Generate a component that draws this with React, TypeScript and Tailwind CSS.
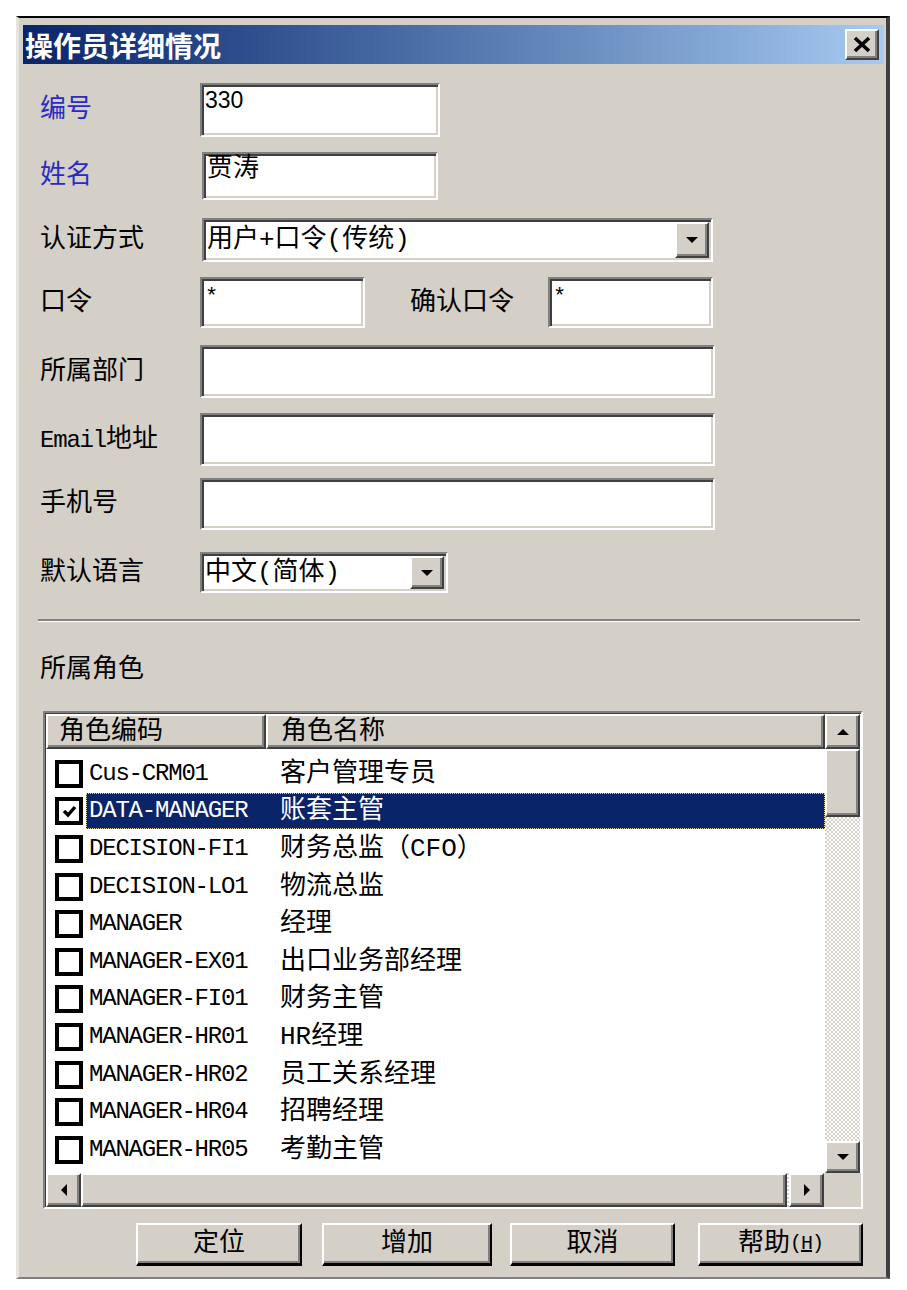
import React from "react";

const cjk = "font-['Liberation_Mono','Noto_Sans_CJK_SC',monospace]";
const sunken =
  "bg-white border-2 border-t-[#808080] border-l-[#808080] border-b-white border-r-white shadow-[inset_2px_2px_0_#404040,inset_-2px_-2px_0_#d4d0c8]";
const raised =
  "bg-[#d4d0c8] border-2 border-t-white border-l-white border-b-[#404040] border-r-[#404040] shadow-[inset_-2px_-2px_0_#808080]";
const checker =
  "bg-[repeating-conic-gradient(#ffffff_0%_25%,#d4d0c8_0%_50%)] bg-size-[4px_4px]";

const roles: [string, string, boolean][] = [
  ["Cus-CRM01", "客户管理专员", false],
  ["DATA-MANAGER", "账套主管", true],
  ["DECISION-FI1", "财务总监（CFO）", false],
  ["DECISION-LO1", "物流总监", false],
  ["MANAGER", "经理", false],
  ["MANAGER-EX01", "出口业务部经理", false],
  ["MANAGER-FI01", "财务主管", false],
  ["MANAGER-HR01", "HR经理", false],
  ["MANAGER-HR02", "员工关系经理", false],
  ["MANAGER-HR04", "招聘经理", false],
  ["MANAGER-HR05", "考勤主管", false],
];

const Arrow = ({ dir }: { dir: "up" | "down" | "left" | "right" }) => {
  const pts = {
    up: "1,7 7,1 13,7",
    down: "1,1 13,1 7,7",
    left: "7,1 7,13 1,7",
    right: "1,1 1,13 7,7",
  }[dir];
  const vert = dir === "up" || dir === "down";
  return (
    <svg width={vert ? 14 : 8} height={vert ? 8 : 14} viewBox={vert ? "0 0 14 8" : "0 0 8 14"}>
      <polygon points={pts} fill="#000" />
    </svg>
  );
};

const Label = ({ text, blue }: { text: string; blue?: boolean }) => (
  <div className={`w-[160px] text-[26px] leading-none ${blue ? "text-[#2b2bc4]" : "text-black"}`}>
    {text}
  </div>
);

const Combo = ({ text, w, h }: { text: string; w: string; h: string }) => (
  <div className={`${sunken} ${w} ${h} flex items-center`}>
    <div className="flex-1 pl-[3px] text-[26px] leading-none text-black whitespace-nowrap">{text}</div>
    <div className={`${raised} w-[34px] h-[calc(100%-4px)] mr-[2px] flex items-center justify-center`}>
      <Arrow dir="down" />
    </div>
  </div>
);

const Btn = ({ children, w, ml }: { children: React.ReactNode; w: string; ml?: string }) => (
  <div
    className={`${w} ${ml || ""} h-[43px] bg-[#d4d0c8] border-t-2 border-l-2 border-t-white border-l-white border-r-2 border-b-[3px] border-r-black border-b-black shadow-[inset_-2px_-2px_0_#808080] flex items-center justify-center text-[26px] leading-none text-black`}
  >
    {children}
  </div>
);

export default function App() {
  return (
    <div className={`min-h-screen bg-white pt-[16px] pl-[16px] ${cjk}`}>
      <div className="w-[874px] h-[1263px] bg-[#d4d0c8] border-t-2 border-t-black border-l-[3px] border-l-[#e6e4de] border-r-4 border-r-[#404040] border-b-2 border-b-[#808080] pt-[7px] pl-[4px]">
        {/* title bar */}
        <div className="w-[861px] h-[39px] bg-linear-to-r from-[#0a246a] to-[#a6caf0] flex items-center pl-[2px] pr-[5px]">
          <div className="flex-1 text-white font-bold text-[28px] leading-none font-['Noto_Sans_CJK_SC',sans-serif]">
            操作员详细情况
          </div>
          <div className={`${raised} w-[34px] h-[31px] flex items-center justify-center`}>
            <svg width="20" height="17" viewBox="0 0 20 17">
              <path d="M3 2 L17 15 M17 2 L3 15" stroke="#000" strokeWidth="3.6" />
            </svg>
          </div>
        </div>

        {/* form */}
        <div className="flex items-center ml-[17px] mt-[19px] h-[54px]">
          <Label text="编号" blue />
          <div className={`${sunken} w-[240px] h-full pl-[3px] pt-[4px] text-[23px] leading-none text-black font-['Liberation_Sans',sans-serif]`}>
            330
          </div>
        </div>
        <div className="flex items-center ml-[17px] mt-[15px] h-[48px]">
          <Label text="姓名" blue />
          <div className={`${sunken} ml-[2px] w-[236px] h-full pl-[3px] pt-[2px] text-[26px] leading-none text-black`}>
            贾涛
          </div>
        </div>
        <div className="flex items-center ml-[17px] mt-[18px] h-[44px]">
          <Label text="认证方式" />
          <div className="ml-[2px]">
            <Combo text="用户+口令(传统)" w="w-[511px]" h="h-[44px]" />
          </div>
        </div>
        <div className="flex items-center ml-[17px] mt-[15px] h-[51px]">
          <Label text="口令" />
          <div className={`${sunken} w-[165px] h-full pl-[3px] pt-[8px] text-[22px] leading-none text-black`}>*</div>
          <div className="ml-[45px] w-[138px] text-[26px] leading-none text-black">确认口令</div>
          <div className={`${sunken} w-[165px] h-full pl-[3px] pt-[8px] text-[22px] leading-none text-black`}>*</div>
        </div>
        <div className="flex items-center ml-[17px] mt-[17px] h-[53px]">
          <Label text="所属部门" />
          <div className={`${sunken} w-[515px] h-full`} />
        </div>
        <div className="flex items-center ml-[17px] mt-[15px] h-[53px]">
          <div className="w-[160px] text-[26px] leading-none text-black">
            <span className="text-[24px] tracking-[-1.2px]">Email</span>地址
          </div>
          <div className={`${sunken} w-[515px] h-full`} />
        </div>
        <div className="flex items-center ml-[17px] mt-[12px] h-[52px]">
          <Label text="手机号" />
          <div className={`${sunken} w-[515px] h-full`} />
        </div>
        <div className="flex items-center ml-[17px] mt-[22px] h-[41px]">
          <Label text="默认语言" />
          <Combo text="中文(简体)" w="w-[248px]" h="h-[41px]" />
        </div>

        <div className="ml-[15px] mt-[26px] w-[822px] h-[3px] border-t-2 border-t-[#808080] border-b border-b-white" />

        <div className="ml-[17px] mt-[35px] h-[26px] text-[26px] leading-none text-black">所属角色</div>

        {/* role list */}
        <div className="ml-[20px] mt-[28px] w-[820px] h-[498px] border-2 border-t-[#808080] border-l-[#808080] border-b-white border-r-white bg-white flex flex-col">
          <div className="flex flex-1 min-h-0 border-t border-l border-t-[#404040] border-l-[#404040]">
            <div className="w-[779px] flex flex-col overflow-hidden">
              <div className="flex h-[35px] shrink-0">
                <div className={`${raised} w-[220px] h-full pl-[11px] flex items-center text-[26px] leading-none text-black`}>
                  角色编码
                </div>
                <div className={`${raised} flex-1 h-full pl-[13px] flex items-center text-[26px] leading-none text-black`}>
                  角色名称
                </div>
              </div>
              <div className="pt-[6px]">
                {roles.map(([code, name, sel]) => (
                  <div key={code} className="flex items-center h-[37.6px] pl-[9px]">
                    <div className="w-[28px] h-[28px] border-[4px] border-black bg-white flex items-center justify-center shrink-0">
                      {sel && (
                        <svg width="15" height="13" viewBox="0 0 15 13">
                          <path d="M2 6 L6 10 L13 2" stroke="#000" strokeWidth="3.4" fill="none" />
                        </svg>
                      )}
                    </div>
                    <div
                      className={`ml-[3px] flex-1 h-[36px] flex items-center border border-dotted ${
                        sel ? "bg-[#0a246a] border-[#d8d0a0] text-white" : "border-transparent text-black"
                      }`}
                    >
                      <div className="w-[193px] pl-[2px] text-[24px] tracking-[-1.2px] leading-none whitespace-nowrap">
                        {code}
                      </div>
                      <div className="text-[26px] leading-none whitespace-nowrap">{name}</div>
                    </div>
                  </div>
                ))}
              </div>
            </div>
            {/* vertical scrollbar */}
            <div className="w-[35px] flex flex-col">
              <div className={`${raised} h-[35px] flex items-center justify-center shrink-0`}>
                <Arrow dir="up" />
              </div>
              <div className={`${raised} h-[68px] shrink-0`} />
              <div className={`flex-1 ${checker}`} />
              <div className={`${raised} h-[32px] flex items-center justify-center shrink-0`}>
                <Arrow dir="down" />
              </div>
            </div>
          </div>
          {/* horizontal scrollbar */}
          <div className="flex h-[34px] shrink-0 border-l border-l-[#404040]">
            <div className={`${raised} w-[35px] h-full flex items-center justify-center`}>
              <Arrow dir="left" />
            </div>
            <div className={`${raised} flex-1 h-full`} />
            <div className={`w-[2px] h-full ${checker}`} />
            <div className={`${raised} w-[35px] h-full flex items-center justify-center`}>
              <Arrow dir="right" />
            </div>
            <div className="w-[37px] h-full bg-[#d4d0c8]" />
          </div>
        </div>

        {/* buttons */}
        <div className="flex mt-[14px] ml-[113px]">
          <Btn w="w-[166px]">定位</Btn>
          <Btn w="w-[170px]" ml="ml-[20px]">增加</Btn>
          <Btn w="w-[165px]" ml="ml-[18px]">取消</Btn>
          <Btn w="w-[165px]" ml="ml-[23px]">
            帮助<span className="text-[20px] tracking-[-1px]">(<span className="underline">H</span>)</span>
          </Btn>
        </div>
      </div>
    </div>
  );
}
